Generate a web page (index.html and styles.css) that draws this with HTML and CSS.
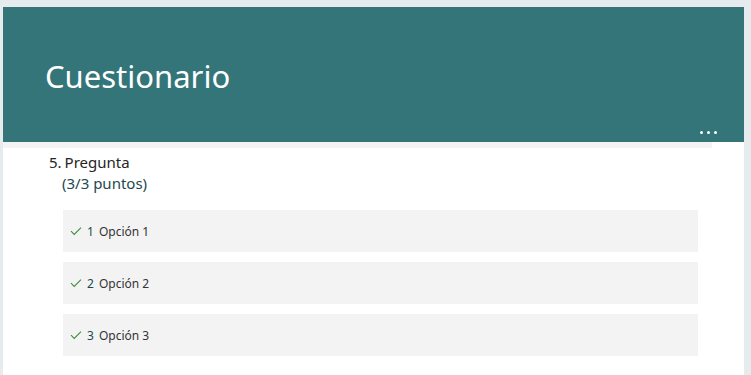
FILE: index.html
```html
<!DOCTYPE html>
<html lang="es">
<head>
<meta charset="utf-8">
<title>Cuestionario</title>
<link rel="stylesheet" href="styles.css">
</head>
<body>
<div class="page">
  <header class="banner">
    <h1 class="title">Cuestionario</h1>
    <div class="more" aria-label="Más opciones"><span></span><span></span><span></span></div>
  </header>
  <div class="band"></div>
  <main class="body">
    <section class="question">
      <div class="q-head">
        <span class="q-num">5.</span>
        <span class="q-text">Pregunta</span>
      </div>
      <div class="q-points">(3/3 puntos)</div>
      <ul class="options">
        <li class="option">
          <svg class="check" viewBox="0 0 12 10" width="12" height="10"><path d="M1 5.2 L4.2 8.4 L11 1.6" fill="none" stroke="#3f8f3f" stroke-width="1.1"/></svg>
          <span class="opt-num">1</span>
          <span class="opt-text">Opción 1</span>
        </li>
        <li class="option">
          <svg class="check" viewBox="0 0 12 10" width="12" height="10"><path d="M1 5.2 L4.2 8.4 L11 1.6" fill="none" stroke="#3f8f3f" stroke-width="1.1"/></svg>
          <span class="opt-num">2</span>
          <span class="opt-text">Opción 2</span>
        </li>
        <li class="option">
          <svg class="check" viewBox="0 0 12 10" width="12" height="10"><path d="M1 5.2 L4.2 8.4 L11 1.6" fill="none" stroke="#3f8f3f" stroke-width="1.1"/></svg>
          <span class="opt-num">3</span>
          <span class="opt-text">Opción 3</span>
        </li>
      </ul>
    </section>
  </main>
</div>
</body>
</html>
```

FILE: styles.css
```css
html, body {
  margin: 0;
  padding: 0;
}
body {
  background: #e6ecee;
  font-family: "Noto Sans", "Open Sans", sans-serif;
  width: 751px;
  height: 375px;
  overflow: hidden;
}
.page {
  margin: 7px 7px 0 3px;
  background: #ffffff;
  height: 368px;
  display: flex;
  flex-direction: column;
}
.banner {
  background: #337579;
  height: 135px;
  display: flex;
  align-items: flex-end;
  justify-content: space-between;
  padding: 0 27px 0 42px;
}
.title {
  margin: 0 0 48px 0;
  font-weight: 400;
  font-size: 31px;
  line-height: 36px;
  color: #ffffff;
}
.more {
  display: flex;
  gap: 4px;
  margin-bottom: 8px;
}
.more span {
  width: 3px;
  height: 3px;
  border-radius: 50%;
  background: #ffffff;
}
.band {
  height: 6px;
  background: #f3f3f3;
  margin-right: 32px;
}
.body {
  flex: 1;
  padding: 0 46px 0 35px;
}
.question {
  padding-top: 4px;
}
.q-head {
  display: flex;
  gap: 3px;
  padding-left: 11px;
  font-size: 15px;
  line-height: 21px;
  color: #252525;
}
.q-points {
  padding-left: 24px;
  font-size: 15px;
  line-height: 21px;
  color: #1c4a50;
}
.options {
  list-style: none;
  margin: 16px 0 0 25px;
  padding: 0;
  display: flex;
  flex-direction: column;
  gap: 10px;
}
.option {
  background: #f3f3f3;
  height: 42px;
  display: flex;
  align-items: center;
  padding-left: 7px;
  font-size: 12px;
  color: #333333;
}
.check {
  margin-right: 5px;
}
.opt-num {
  color: #1c4a50;
  margin-right: 5px;
}
```
